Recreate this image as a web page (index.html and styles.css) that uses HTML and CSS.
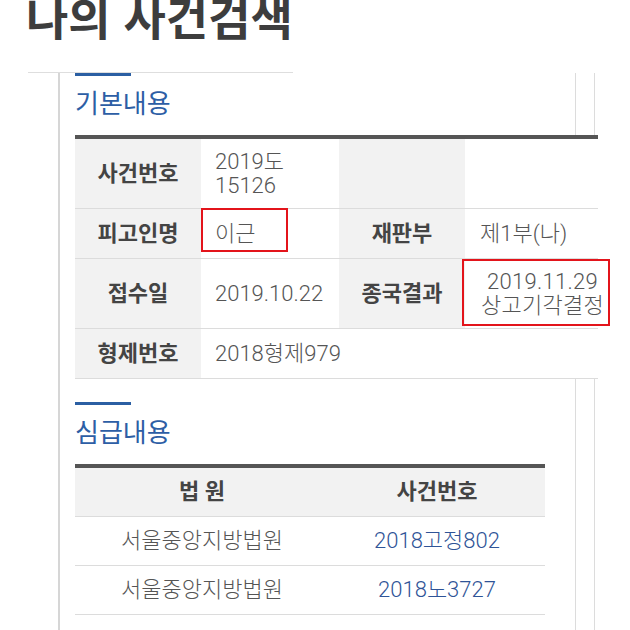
FILE: index.html
```html
<!DOCTYPE html>
<html lang="ko">
<head>
<meta charset="utf-8">
<link rel="stylesheet" href="styles.css">
</head>
<body>
<div class="page">
  <h1 class="title">나의 사건검색</h1>
  <div class="rule"></div>
  <div class="frame">
    <div class="panel">
      <section class="sec">
        <div class="bar"></div>
        <h2 class="sec-title">기본내용</h2>
        <table class="info">
          <colgroup>
            <col class="w-label">
            <col class="w-value">
            <col class="w-label">
            <col class="w-last">
          </colgroup>
          <tr class="tall">
            <th>사건번호</th>
            <td>2019도<br>15126</td>
            <th></th>
            <td></td>
          </tr>
          <tr>
            <th>피고인명</th>
            <td class="marked">이근<span class="mark mark-name"></span></td>
            <th>재판부</th>
            <td class="last">제1부(나)</td>
          </tr>
          <tr class="tall">
            <th>접수일</th>
            <td>2019.10.22</td>
            <th>종국결과</th>
            <td class="marked result"><div class="result-text">2019.11.29<br>상고기각결정</div><span class="mark mark-result"></span></td>
          </tr>
          <tr>
            <th>형제번호</th>
            <td colspan="3">2018형제979</td>
          </tr>
        </table>
      </section>
      <section class="sec sec2">
        <div class="bar"></div>
        <h2 class="sec-title">심급내용</h2>
        <table class="courts">
          <colgroup>
            <col class="w-court">
            <col>
          </colgroup>
          <tr>
            <th>법 원</th>
            <th>사건번호</th>
          </tr>
          <tr>
            <td>서울중앙지방법원</td>
            <td class="link">2018고정802</td>
          </tr>
          <tr>
            <td>서울중앙지방법원</td>
            <td class="link">2018노3727</td>
          </tr>
        </table>
      </section>
    </div>
  </div>
</div>
</body>
</html>
```

FILE: styles.css
```css
html, body {
  margin: 0;
  padding: 0;
  background: #fff;
  overflow: hidden;
}
body {
  font-family: Roboto, "Noto Sans CJK KR", sans-serif;
  color: #444;
}
.page {
  width: 630px;
  height: 630px;
  overflow: hidden;
}
.title {
  margin: -12px 0 0 26px;
  font-size: 46px;
  line-height: 54px;
  font-weight: 700;
  color: #3d3d3d;
  font-family: "Noto Sans CJK KR", sans-serif;
}
.rule {
  margin: 30px 0 0 28px;
  width: 265px;
  height: 1px;
  background: #dedede;
}
.frame {
  margin-left: 58px;
  width: 534px;
  border-left: 2px solid #d6d6d6;
  border-right: 1px solid #dcdcdc;
}
.panel {
  width: 500px;
  border-right: 1px solid #dcdcdc;
  padding: 0 0 40px 15px;
}
.bar {
  width: 56px;
  height: 3px;
  background: #2b5fa3;
}
.sec-title {
  margin: 8px 0 15px;
  font-family: "Noto Sans CJK KR", sans-serif;
  font-size: 26px;
  line-height: 36px;
  font-weight: 400;
  color: #2d5ea5;
}
.sec2 {
  margin-top: 23px;
}
table {
  border-collapse: collapse;
  font-size: 22px;
  line-height: 24px;
  table-layout: fixed;
}
.info {
  width: 523px;
  border-top: 4px solid #555;
}
.w-label { width: 126px; }
.w-value { width: 138px; }
.w-last { width: 133px; }
.w-court { width: 254px; }
.info th, .info td {
  border-bottom: 1px solid #dcdcdc;
  padding: 13px 0 12px;
  vertical-align: middle;
}
.info tr.tall th, .info tr.tall td {
  padding-top: 11px;
  padding-bottom: 10px;
}
.info th {
  background: #f2f2f2;
  font-weight: 700;
  color: #444;
  text-align: center;
}
.info td {
  background: #fff;
  color: #555;
  font-weight: 300;
  padding-left: 14px;
  text-align: left;
}
.info td.last {
  padding-left: 15px;
}
.info td.result {
  padding-left: 0;
  text-align: center;
}
.result-text {
  margin-right: -22px;
  white-space: nowrap;
  letter-spacing: 0.3px;
}
.marked {
  position: relative;
}
.mark {
  position: absolute;
  border: 2px solid #e3141b;
  box-sizing: border-box;
}
.mark-name {
  left: 0;
  top: -1px;
  width: 87px;
  height: 44px;
}
.mark-result {
  left: -3px;
  top: 0;
  width: 148px;
  height: 67px;
}
.courts {
  width: 470px;
  border-top: 4px solid #555;
}
.courts th, .courts td {
  text-align: center;
  border-bottom: 1px solid #dcdcdc;
  padding: 12px 0;
}
.courts th {
  background: #f2f2f2;
  font-weight: 700;
  color: #444;
}
.courts td {
  color: #555;
  font-weight: 300;
}
.courts td.link {
  color: #2f5497;
}
```
